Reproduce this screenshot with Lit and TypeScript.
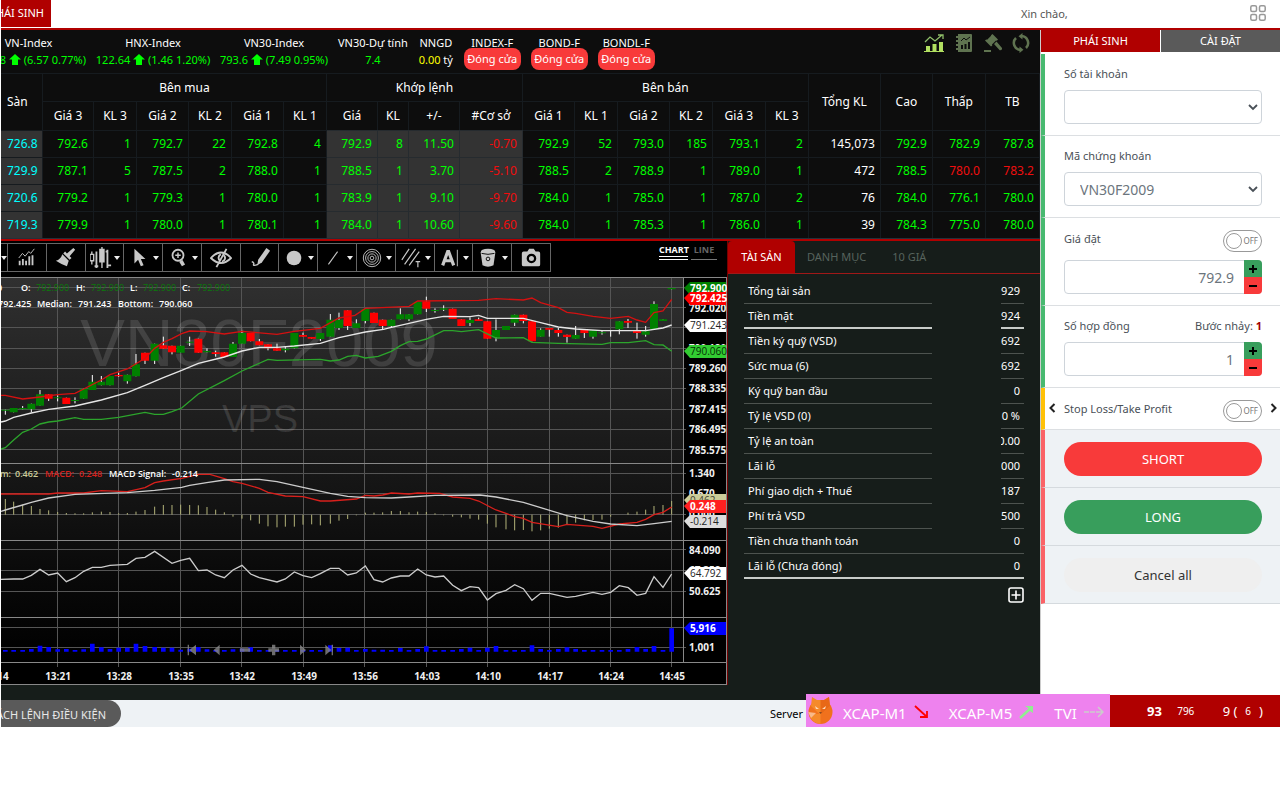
import { LitElement, html, svg, css } from "lit";
import { customElement, property } from "lit/decorators.js";
import { classMap } from "lit/directives/class-map.js";

/* ------------------------------------------------------------------ */
/* Price board                                                         */
/* ------------------------------------------------------------------ */

const COLS = [42, 51, 43, 52, 43, 52, 43, 51, 31, 51, 63, 52, 43, 52, 43, 53, 43, 72, 52, 53, 54];
const COL_SUM = COLS.reduce((a, b) => a + b, 0);

const ROWS: string[][] = [
  ["726.8", "792.6", "1", "792.7", "22", "792.8", "4", "792.9", "8", "11.50", "-0.70", "792.9", "52", "793.0", "185", "793.1", "2", "145,073", "792.9", "782.9", "787.8"],
  ["729.9", "787.1", "5", "787.5", "2", "788.0", "1", "788.5", "1", "3.70", "-5.10", "788.5", "2", "788.9", "1", "789.0", "1", "472", "788.5", "780.0", "783.2"],
  ["720.6", "779.2", "1", "779.3", "1", "780.0", "1", "783.9", "1", "9.10", "-9.70", "784.0", "1", "785.0", "1", "787.0", "2", "76", "784.0", "776.1", "780.0"],
  ["719.3", "779.9", "1", "780.0", "1", "780.1", "1", "784.0", "1", "10.60", "-9.60", "784.0", "1", "785.3", "1", "786.0", "1", "39", "784.3", "775.0", "780.0"],
];
const RED_CELLS = new Set(["1:19", "1:20"]);

const up = svg`<svg class="up" viewBox="0 0 12 11" width="12" height="11"><path fill="#0f0" d="M6 0 12 5.5H9V11H3V5.5H0z"/></svg>`;

@customElement("price-board")
export class PriceBoard extends LitElement {
  static styles = css`
    :host { display: block; background: #0d0d0d; color: #fff; }
    .strip { display: flex; justify-content: space-between; height: 43px; overflow: hidden; }
    .indices { display: flex; gap: 10px; padding-top: 4px; }
    .index { display: flex; flex-direction: column; align-items: center; white-space: nowrap; font-size: 11px; line-height: 18px; min-width: 36px; }
    .index.first { margin-left: -30px; width: 115px; }
    .index.wide { width: 114px; }
    .index.mid { width: 108px; }
    .value { color: #0f0; line-height: 16px; height: 16px; }
    .first .value { align-self: flex-end; }
    .up { vertical-align: -1px; }
    .nn { color: #ff0; }
    .nn i { color: #fff; font-style: normal; }
    .closed { background: #f83a3a; border-radius: 8px; width: 57px; height: 22px; line-height: 22px; margin-top: -4px; text-align: center; color: #fff; }
    .icons { display: flex; gap: 9px; padding: 3px 9px 0 0; align-items: flex-start; }
    .icons button { padding: 0; border: 0; background: none; width: 20px; height: 20px; display: grid; place-items: center; }
    table { width: 100%; table-layout: fixed; border-collapse: separate; border-spacing: 0; font-size: 12px; line-height: 18px; }
    th, td { padding: 0; box-sizing: border-box; border-right: 1px solid #161b1f; border-top: 1px solid #161b1f; white-space: nowrap; }
    th { font-weight: 400; }
    th.floor { text-align: left; padding-left: 6px; }
    .h1 { height: 28px; }
    .h2 { height: 29px; }
    td { height: 27px; text-align: right; padding-right: 5px; color: #0f0; }
    td.floor { color: #0ff; background: #333; text-align: left; padding-left: 6px; }
    td.match { background: #333; border-color: #262b2f; }
    td.red { color: #f00d0d; }
    td.total { color: #fff; }
    .base { height: 3px; background: #b00000; border-top: 1px solid #25303a; box-sizing: border-box; }
  `;

  render() {
    return html`
      <div class="strip">
        <div class="indices">
          <div class="index first"><span>VN-Index</span><span class="value">8 ${up} (6.57 0.77%)</span></div>
          <div class="index wide"><span>HNX-Index</span><span class="value">122.64 ${up} (1.46 1.20%)</span></div>
          <div class="index mid"><span>VN30-Index</span><span class="value">793.6 ${up} (7.49 0.95%)</span></div>
          <div class="index"><span>VN30-Dự tính</span><span class="value">7.4</span></div>
          <div class="index"><span>NNGD</span><span class="value nn">0.00 <i>tỷ</i></span></div>
          ${["INDEX-F", "BOND-F", "BONDL-F"].map((n) => html`<div class="index"><span>${n}</span><span class="closed">Đóng cửa</span></div>`)}
        </div>
        <div class="icons">
          <button aria-label="Biểu đồ"><svg width="20" height="20" viewBox="0 0 20 20" fill="#b2e061"><path d="M2 13h4v5H2zM8.500 11h4v7h-4zM15 9h4v9h-4zM0 18h20v1H0z"/><path d="M1 9 6 4l5 4 7-6M14 2h5v4" fill="none" stroke="#8fbf6a" stroke-width="1.300"/></svg></button>
          <button aria-label="Sổ"><svg width="20" height="20" viewBox="0 0 20 20"><path fill="#5f7350" d="M5 1h13q1 0 1 1v16q0 1-1 1H5zM3 3h3v2H3zM3 7h3v2H3zM3 11h3v2H3zM3 15h3v2H3z"/><path d="M8 8 11 5l2 2 4-3" fill="none" stroke="#0d0d0d"/><path fill="#0d0d0d" d="M8 12h2v4H8zM11.500 11h2v5h-2zM15 9h2v7h-2z"/></svg></button>
          <button aria-label="Đấu giá"><svg width="20" height="20" viewBox="0 0 20 20" fill="#5f7350"><path d="M10.500 1 16 6.500l-1.200 1.200-.8-.2-4 4 .3.900-1.300 1.200L3 7.600l1.200-1.200.9.300 4-4L9 2.200zM12 11l2.500-2.500 5.500 6.500q.3 2.500-2.300 2.300zM2 17h7v2H2z"/></svg></button>
          <button aria-label="Tải lại"><svg width="20" height="20" viewBox="0 0 20 20"><g fill="none" stroke="#5f7350" stroke-width="2.500"><path d="M9.500 17A7 7 0 0 1 5 5M10.500 3A7 7 0 0 1 15 15"/></g><path fill="#5f7350" d="M11.500 0v6.500L7.500 3.200zM8.500 13.500V20l4-3.300z"/></svg></button>
        </div>
      </div>
      <table>
        <colgroup>${COLS.map((w) => html`<col style="width:${(w / COL_SUM) * 100}%" />`)}</colgroup>
        <thead>
          <tr>
            <th class="floor" rowspan="2">Sàn</th>
            <th class="h1" colspan="6">Bên mua</th>
            <th colspan="4">Khớp lệnh</th>
            <th colspan="6">Bên bán</th>
            ${["Tổng KL", "Cao", "Thấp", "TB"].map((t) => html`<th rowspan="2">${t}</th>`)}
          </tr>
          <tr>
            ${["Giá 3", "KL 3", "Giá 2", "KL 2", "Giá 1", "KL 1", "Giá", "KL", "+/-", "#Cơ sở", "Giá 1", "KL 1", "Giá 2", "KL 2", "Giá 3", "KL 3"].map((t) => html`<th class="h2">${t}</th>`)}
          </tr>
        </thead>
        <tbody>
          ${ROWS.map((r, y) => html`<tr>${r.map((v, x) => html`<td class=${classMap({
            floor: x === 0,
            match: x > 6 && x < 11,
            red: x === 10 || RED_CELLS.has(`${y}:${x}`),
            total: x === 17,
          })}>${v}</td>`)}</tr>`)}
        </tbody>
      </table>
      <div class="base"></div>
    `;
  }
}

/* ------------------------------------------------------------------ */
/* Chart                                                               */
/* ------------------------------------------------------------------ */

// x centre, body top, body bottom, wick top, wick bottom, 1 = rising
const CANDLES: number[][] = [
  [16, 509, 512, 509, 524, 1], [41, 504, 517, 504, 517, 1], [68, 504, 508, 498, 508, 1], [94, 491, 508, 491, 517, 1],
  [120, 463, 497, 450, 497, 1], [146, 463, 476, 463, 483, 0], [173, 472, 475, 466, 484, 1], [199, 473, 492, 473, 492, 0],
  [225, 480, 483, 472, 490, 1], [251, 446, 476, 446, 476, 1], [277, 425, 450, 405, 450, 1], [304, 425, 436, 408, 436, 1],
  [330, 408, 436, 408, 436, 1], [356, 405, 409, 398, 411, 0], [382, 404, 424, 404, 431, 1], [408, 373, 409, 342, 409, 1],
  [435, 338, 362, 338, 372, 0], [464, 311, 362, 311, 372, 1], [490, 316, 326, 290, 326, 0], [516, 317, 337, 317, 343, 0],
  [542, 317, 338, 317, 338, 1], [569, 305, 308, 290, 318, 1], [595, 296, 338, 296, 338, 0], [621, 333, 337, 325, 337, 1],
  [647, 337, 342, 332, 350, 0], [673, 337, 351, 337, 351, 0], [699, 311, 351, 306, 351, 1], [726, 279, 311, 272, 311, 1],
  [752, 279, 304, 279, 304, 0], [778, 304, 316, 297, 316, 0], [804, 313, 325, 313, 331, 0], [831, 325, 332, 311, 332, 0],
  [856, 326, 331, 320, 337, 1], [883, 279, 325, 279, 325, 1], [909, 285, 290, 278, 290, 0], [935, 291, 296, 291, 296, 0],
  [961, 279, 297, 279, 303, 1], [991, 239, 290, 222, 290, 1], [1017, 239, 264, 218, 270, 1], [1043, 211, 258, 211, 270, 0],
  [1069, 250, 264, 238, 264, 1], [1096, 207, 243, 207, 250, 1], [1122, 218, 249, 218, 249, 0], [1148, 239, 258, 239, 268, 0],
  [1174, 239, 258, 239, 264, 1], [1201, 223, 238, 205, 238, 1], [1227, 223, 238, 223, 243, 1], [1253, 186, 223, 186, 223, 1],
  [1279, 184, 206, 170, 216, 0], [1305, 210, 213, 205, 218, 1], [1331, 205, 209, 196, 213, 1], [1358, 206, 237, 206, 237, 0],
  [1384, 238, 258, 238, 258, 0], [1410, 240, 249, 232, 258, 1], [1436, 238, 243, 233, 243, 0], [1462, 244, 296, 244, 296, 0],
  [1488, 270, 292, 238, 304, 1], [1518, 258, 270, 258, 270, 1], [1544, 224, 248, 224, 258, 1], [1570, 224, 243, 224, 250, 0],
  [1596, 244, 304, 244, 304, 0], [1622, 269, 290, 265, 290, 1], [1648, 264, 269, 264, 290, 0], [1675, 270, 279, 264, 290, 0],
  [1701, 284, 291, 284, 308, 0], [1727, 285, 296, 258, 296, 1], [1753, 270, 279, 270, 294, 0], [1779, 271, 290, 271, 296, 1],
  [1806, 277, 280, 270, 284, 1], [1832, 270, 273, 270, 290, 1], [1858, 244, 268, 244, 283, 1], [1884, 243, 248, 237, 264, 0],
  [1911, 273, 279, 248, 296, 0], [1937, 274, 284, 258, 290, 1], [1962, 192, 267, 184, 267, 1], [1989, 238, 243, 238, 243, 1],
  [2015, 144, 148, 144, 148, 1],
];

const UPPER = "3,466 16,466 68,477 120,471 173,464 225,460 251,447 304,420 330,404 382,387 435,355 464,325 490,307 516,296 545,281 569,273 620,275 673,282 726,274 831,283 883,274 961,265 1017,234 1065,226 1096,205 1227,199 1253,183 1436,181 1488,176 1570,180 1596,174 1622,188 1675,203 1701,217 1727,220 1779,229 1832,235 1885,229 1911,240 1937,247 1962,218 1989,213 2015,178";
const MEDIAN = "3,546 16,543 41,532 94,519 146,508 225,498 304,480 382,458 435,436 490,413 545,391 595,370 673,351 726,333 778,322 831,322 883,318 961,310 1017,293 1096,276 1150,268 1174,262 1227,250 1279,238 1331,229 1410,230 1436,226 1462,235 1570,235 1622,248 1675,261 1727,267 1806,272 1937,272 1989,264 2015,255";
const LOWER = "3,627 16,623 41,600 68,577 94,567 120,552 146,546 173,543 225,533 251,538 304,538 356,532 435,517 464,523 490,523 516,515 545,504 595,462 673,422 726,393 804,358 831,361 961,358 991,363 1017,360 1043,349 1069,346 1096,354 1135,349 1174,334 1201,317 1227,305 1253,304 1279,297 1331,272 1358,272 1384,275 1436,269 1488,294 1570,293 1596,307 1675,310 1806,313 1832,308 1885,308 1937,302 1962,314 1989,315 2015,334";
const MACD = "3,102 146,102 173,99 251,99 304,92 382,95 435,83 464,68 490,63 545,55 595,43 630,43 673,56 699,65 726,70 778,85 804,97 856,108 909,110 961,123 991,123 1069,117 1096,106 1122,108 1148,105 1174,99 1227,102 1253,99 1320,100 1358,111 1410,115 1436,123 1488,150 1518,160 1544,170 1570,175 1596,187 1675,200 1701,193 1779,199 1806,205 1858,192 1911,187 1937,178 1962,164 1989,157 2015,141";
const SIGNAL = "3,154 16,150 68,135 94,127 146,114 225,103 382,98 464,91 545,82 569,76 620,68 673,60 778,58 831,65 909,82 991,100 1043,109 1096,113 1174,114 1227,111 1305,106 1440,105 1488,111 1570,127 1622,143 1701,167 1779,184 1832,192 1911,197 1962,191 2015,184";
const RSI = "3,358 41,357 68,357 94,346 120,328 146,345 173,339 199,365 225,353 251,334 277,322 304,322 330,316 382,313 408,295 435,292 464,274 516,310 542,301 569,295 595,332 621,330 647,345 673,353 699,330 726,316 752,342 778,353 831,366 856,357 883,336 909,347 935,353 961,341 991,325 1017,325 1043,345 1069,339 1096,318 1122,359 1148,366 1174,354 1201,348 1227,348 1253,327 1279,345 1305,351 1331,348 1358,376 1384,392 1410,380 1436,383 1462,420 1488,401 1518,391 1544,374 1570,386 1596,421 1622,400 1648,400 1701,412 1727,409 1779,397 1806,403 1832,397 1858,377 1885,383 1911,406 1937,400 1962,350 1989,382 2015,342";

// one value per candle, measured from the zero line at 164
const HIST = [117, 125, 134, 138, 147, 151, 156, 159, 160, 160, 157, 155, 156, 160, 159, 155, 150, 140, 135, 135, 134, 135, 136, 141, 149, 157, 170, 176, 181, 191, 199, 202, 200, 200, 194, 193, 196, 191, 182, 177, 166, 158, 158, 157, 153, 153, 157, 155, 156, 160, 166, 170, 172, 176, 179, 191, 202, 208, 211, 210, 214, 211, 206, 203, 192, 188, 181, 180, 179, 170, 164, 158, 155, 149, 138, 135, 123];

// bars taller than the usual minimum, by candle x
const VOLUME: Record<number, number> = {
  94: 567, 120: 557, 146: 561, 173: 568, 199: 567, 225: 570, 251: 568, 277: 551, 304: 562, 330: 567, 356: 563, 382: 563,
  408: 551, 435: 558, 464: 561, 490: 563, 516: 563, 542: 569, 569: 566, 595: 561, 621: 568, 699: 568, 726: 566, 752: 562,
  991: 556, 1017: 564, 1043: 563, 1096: 567, 1122: 569, 1148: 569, 1201: 564, 1253: 567, 1279: 559, 1384: 567,
  1410: 563, 1462: 563, 1488: 558, 1596: 556, 1622: 567, 1675: 567, 1701: 562, 1727: 567, 1884: 567, 1911: 561,
  1937: 567, 1962: 558, 2015: 505,
};

const GRID_Y = [288, 308, 328, 349, 369, 389, 410, 430, 450, 474, 494, 515, 550, 571, 592, 628, 648];
const GRID_X = [58, 119, 181, 242, 304, 365, 427, 488, 550, 611, 672];
const TIMES = ["13:21", "13:28", "13:35", "13:42", "13:49", "13:56", "14:03", "14:10", "14:17", "14:24", "14:45"];
const PRICES: [string, number][] = [
  ["792.020", 308], ["790.180", 348], ["789.260", 368], ["788.335", 388], ["787.415", 409], ["786.495", 429], ["785.575", 450],
  ["1.340", 473], ["0.670", 493], ["0.000", 514], ["84.090", 550], ["67.358", 570], ["50.625", 591], ["1,001", 647],
];
const TAGS: [string, number, string, string, boolean][] = [
  ["792.900", 288, "#008000", "#fff", true], ["792.425", 298, "#f00", "#fff", true], ["791.243", 325, "#fff", "#222", false],
  ["790.060", 351, "#32cd32", "#063006", false], ["0.462", 500, "#cccc99", "#443", false], ["0.248", 506, "#ff2020", "#fff", true],
  ["-0.214", 521, "#ddd", "#222", false], ["64.792", 573, "#fff", "#222", false], ["5,916", 628, "#00f", "#fff", true],
];

const g = "#c8c8c8";
const TOOLS: [string, unknown, boolean][] = [
  ["Chỉ báo", svg`<g stroke=${g} fill="none"><path d="M3 12 7 7l3 3 4-5 2 2 4-5"/><path stroke-width="2" d="M4 20v-5M7.500 20v-7M11 20v-5M14.500 20V10M18 20V9"/></g>`, false],
  ["Định dạng", svg`<path fill=${g} d="m20 1 2 2-6 7 2 2-2 2-7-7 2-2 2 2zM8 8l7 7-2 6q-6-2-12-6 5-1 7-7z"/>`, false],
  ["Kiểu nến", svg`<g stroke=${g} fill="none" stroke-width="1.500"><path d="M0 8h4v7H0zM2 5v3M2 15v4"/><path d="M7 5v18M5 21h4M19 3v20M17 5h2M19 20h4" stroke-width="2"/></g><path fill=${g} d="M10 2h6v15h-6zM12.300 0h1.500v23h-1.500z"/>`, true],
  ["Con trỏ", svg`<path fill=${g} d="M7 2v16l4-4 3 7 3-1-3-7h5z"/>`, true],
  ["Phóng to", svg`<g fill="none" stroke=${g} stroke-width="2"><circle cx="12" cy="9" r="6"/><path stroke-width="4" d="m15 15 3 5"/></g><path fill=${g} d="M9 8.200h6v1.600H9zM11.200 6h1.600v6h-1.600z"/>`, true],
  ["Ẩn hiện", svg`<g fill="none" stroke=${g} stroke-width="2"><path d="M1 12q11-12 22 0Q12 23 1 12zM18 2 7 22"/><path d="M12 8a4 4 0 0 0-1 7M15 9a4 4 0 0 1-2 7"/></g>`, false],
  ["Vẽ", svg`<path fill=${g} d="m19 1 4 3-9 13-5 3 1-6z"/><path d="M3 16q3 1 2 3t5 0" stroke=${g} stroke-width="1.500" fill="none"/>`, false],
  ["Hình", svg`<circle cx="12" cy="12" r="8" fill=${g}/>`, true],
  ["Đường", svg`<path d="M7 19 17 5" stroke=${g} stroke-width="1.200"/>`, true],
  ["Vòng tròn", svg`<g fill="none" stroke=${g}><circle cx="12" cy="12" r="9.500"/><circle cx="12" cy="12" r="7"/><circle cx="12" cy="12" r="4.500"/><circle cx="12" cy="12" r="2"/></g>`, true],
  ["Kênh", svg`<g stroke=${g} fill="none" stroke-width="1.300"><path d="M2 14 10 2M5 19 17 2M10 20 21 5"/><path d="M17 16h5M19.500 16v6"/></g>`, true],
  ["Văn bản", svg`<path fill="none" stroke=${g} stroke-width="3.500" d="M4 20 9.500 5h1L16 20M6 15h8"/><path d="M20 3v18" stroke=${g}/>`, true],
  ["Xóa", svg`<path fill=${g} d="M4 6q0-4 8-4t8 4l-2 14q-6 3-12 0z"/><path d="M5 7q7 2 14 0" stroke="#000" fill="none"/><circle cx="12" cy="13" r="2" fill="none" stroke="#000"/>`, true],
  ["Chụp ảnh", svg`<path fill=${g} d="M4 5h4l2-3h5l2 3h3q2 0 2 2v12q0 2-2 2H4q-2 0-2-2V7q0-2 2-2z"/><circle cx="12.500" cy="12.500" r="4" fill=${g} stroke="#000" stroke-width="2.500"/>`, false],
];

@customElement("trade-chart")
export class TradeChart extends LitElement {
  static styles = css`
    :host { display: block; background: #000; overflow: hidden; }
    .bar { display: flex; justify-content: space-between; height: 36px; padding-top: 2px; box-sizing: border-box; }
    .tools { display: grid; grid-template-columns: 7px repeat(14, minmax(0, 1fr)); width: 550px; height: 29px; }
    .tools button { display: flex; align-items: center; justify-content: center; padding: 0; background: #000; border: 1px solid #666; border-left-width: 0; box-sizing: border-box; min-width: 0; }
    .tools button.cut { border-left: 0; justify-content: flex-start; }
    .tools button.menu { justify-content: space-between; padding: 0 3px 0 4px; }
    .caret { width: 0; height: 0; border: 3px solid transparent; border-top: 4px solid #eee; border-bottom: 0; flex: none; }
    .modes { display: flex; gap: 3px; padding: 1px 10px 0 0; font-family: "Open Sans", "Noto Sans", sans-serif; }
    .modes button { background: none; padding: 0 0 4px; box-sizing: border-box; border: 0; border-bottom: 1px solid #777; font: 700 9px/11px "Open Sans", "Noto Sans", sans-serif; color: #666; height: 16px; width: 26px; text-align: center; }
    .modes button.on { color: #fff; border-bottom: 4px double #fff; width: 29px; padding-bottom: 1px; }
    .wrap { display: flex; justify-content: flex-end; }
    svg.plot { flex: none; display: block; width: 726px; height: 408px; font-family: "Open Sans", "Noto Sans", sans-serif; font-size: 10px; }
    .b { font-weight: 700; fill: #f0f0f0; }
    .sm { font-size: 9px; font-weight: 600; fill: #fff; }
    .gr { fill: #0a7a0a; font-weight: 400; }
    .mark { font-family: "Liberation Sans", Arial, sans-serif; fill: #fff; fill-opacity: 0.12; text-anchor: middle; }
    .mk1 { font-size: 67px; }
    .mk2 { font-size: 38px; }
    .t { text-anchor: middle; }
  `;

  render() {
    return html`
      <div class="bar">
        <div class="tools">
          <button class="cut" aria-label="Khung thời gian"><span class="caret"></span></button>
          ${TOOLS.map(([name, art, menu]) => html`<button class=${menu ? "menu" : ""} aria-label=${name}><svg width="22" height="22" viewBox="0 0 24 24">${art}</svg>${menu ? html`<span class="caret"></span>` : ""}</button>`)}
        </div>
        <div class="modes"><button class="on">CHART</button><button>LINE</button></div>
      </div>
      <div class="wrap">
        <svg class="plot" viewBox="1 277 726 408">
          <defs>
            <linearGradient id="bg" x1="0" y1="0" x2="0" y2="1"><stop offset="0" stop-color="#303030"/><stop offset=".8" stop-color="#080808"/><stop offset="1" stop-color="#000"/></linearGradient>
          </defs>
          <rect x="0" y="277" width="728" height="408" fill="#000"/>
          <rect x="0" y="278" width="683" height="384" fill="url(#bg)"/>
          <path stroke="#555" stroke-width="1" fill="none" d=${GRID_Y.map((y) => `M0 ${y - 0.5}H686`).join("") + GRID_X.map((x) => `M${x - 0.5} 278V667`).join("")}/>
          <text class="mark mk1" x="259" y="366">VN30F2009</text>
          <text class="mark mk2" x="260" y="432">VPS</text>
          <path stroke="#888" fill="none" d="M0 277.500H727M0 463.500H727M0 540.500H727M0 617.500H727M0 662.500H727M0 684.500H727M683.500 277V662M726.500 277V685"/>
          <g transform="translate(0 240) scale(.33333)" fill="none">
            <path stroke="#fff" stroke-width="3" d=${CANDLES.map((c) => `M${c[0]} ${c[3]}V${c[4]}`).join("")}/>
            <path fill="#008000" d=${CANDLES.filter((c) => c[5]).map((c) => `M${c[0] - 12} ${c[1]}h24V${c[2]}h-24z`).join("")}/>
            <path fill="#f00" d=${CANDLES.filter((c) => !c[5]).map((c) => `M${c[0] - 12} ${c[1]}h24V${c[2]}h-24z`).join("")}/>
            <g stroke-width="4">
              <polyline stroke="#d41111" points=${UPPER}/>
              <polyline stroke="#e6e6e6" points=${MEDIAN}/>
              <polyline stroke="#2ca52c" points=${LOWER}/>
            </g>
            <g transform="translate(0 660)">
              <path stroke="#b5b57a" stroke-width="3" d=${CANDLES.map((c, i) => `M${c[0]} 164V${HIST[i]}`).join("")}/>
              <g stroke-width="4">
                <polyline stroke="#d8201c" points=${MACD}/>
                <polyline stroke="#ccc" points=${SIGNAL}/>
                <polyline stroke="#ccc" points=${RSI}/>
              </g>
              <path fill="#00f" d=${CANDLES.map((c) => `M${c[0] - 7} ${VOLUME[c[0]] ?? 570}h14V575h-14z`).join("")}/>
              <path fill="#888" fill-opacity=".8" d="M563 554h4v32h-4zM588 554v32L568 570zM659 554v32L641 570zM720 565h30v10h-30zM805 565h11V554h10v11h11v10h-11v11h-10v-11h-11zM900 554v32L918 570zM976 554v32L994 570zM995 554h4v32h-4z"/>
            </g>
          </g>
          <g class="sm">
            <text x="-3" y="291">0</text>
            <text x="21" y="291">O:</text><text class="gr" x="36" y="291">792.900</text>
            <text x="76" y="291">H:</text><text class="gr" x="91" y="291">792.900</text>
            <text x="130" y="291">L:</text><text class="gr" x="143" y="291">792.900</text>
            <text x="182" y="291">C:</text><text class="gr" x="197" y="291">792.900</text>
            <text x="-2" y="307">792.425</text><text x="37" y="307">Median:</text><text x="78" y="307">791.243</text>
            <text x="118" y="307">Bottom:</text><text x="159" y="307">790.060</text>
            <text x="0" y="477" fill="#cccc99">m:</text><text x="15" y="477" fill="#cccc99">0.462</text>
            <text x="45" y="477" fill="#d8201c">MACD:</text><text x="79" y="477" fill="#d8201c">0.248</text>
            <text x="109" y="477">MACD Signal:</text><text x="172" y="477">-0.214</text>
          </g>
          ${PRICES.map(([t, y]) => svg`<text class="b" x="689" y=${y + 4}>${t}</text>`)}
          ${TAGS.map(([t, y, bg, fg, bold]) => svg`<path fill=${bg} d="M684 ${y} 690 ${y - 6}H726V${y + 7}H690z"/><text x="690" y=${y + 4} fill=${fg} font-weight=${bold ? 700 : 400}>${t}</text>`)}
          <text class="b t" x="3" y="680">14</text>
          ${TIMES.map((t, i) => svg`<text class="b t" x=${GRID_X[i]} y="680">${t}</text>`)}
        </svg>
      </div>
    `;
  }
}

/* ------------------------------------------------------------------ */
/* Assets                                                              */
/* ------------------------------------------------------------------ */

const ASSETS: [string, string][] = [
  ["Tổng tài sản", "929"], ["Tiền mặt", "924"], ["Tiền ký quỹ (VSD)", "692"], ["Sức mua (6)", "692"],
  ["Ký quỹ ban đầu", "0"], ["Tỷ lệ VSD (0)", "0 %"], ["Tỷ lệ an toàn", "0.00"], ["Lãi lỗ", "000"],
  ["Phí giao dịch + Thuế", "187"], ["Phí trả VSD", "500"], ["Tiền chưa thanh toán", "0"], ["Lãi lỗ (Chưa đóng)", "0"],
];

@customElement("asset-panel")
export class AssetPanel extends LitElement {
  static styles = css`
    :host { display: block; background: #161d1a; color: #fff; border-left: 1px solid #700; box-sizing: border-box; }
    .tabs { display: flex; height: 33px; box-sizing: border-box; border-bottom: 1px solid #a01818; }
    .tabs button { border: 0; padding: 0 14px 0 12px; background: none; color: #57635d; font: 11px/32px "Noto Sans", sans-serif; }
    .tabs button.on { background: #b00000; color: #fff; border-radius: 4px 4px 0 0; width: 67px; padding: 0; }
    .body { padding: 5px 16px 0 16px; }
    table { width: 100%; border-collapse: separate; border-spacing: 0; table-layout: fixed; font-size: 11px; line-height: 18px; }
    th, td { height: 25px; box-sizing: border-box; padding: 0; border-bottom: 1px solid #4d534f; font-weight: 400; white-space: nowrap; }
    th { text-align: left; padding-left: 4px; width: 188px; }
    td.gap { border-color: transparent; }
    td.val { width: 23px; }
    .num { display: flex; justify-content: flex-end; overflow: hidden; padding-right: 4px; }
    .full td.gap { border-color: #4d534f; }
    .thick th, .thick td.val { border-bottom: 2px solid #c8ccc9; }
    .thick.full td.gap { border-bottom: 2px solid #c8ccc9; }
    .more { display: flex; justify-content: flex-end; padding-top: 8px; }
    .more button { background: none; border: 0; padding: 0; height: 16px; }
  `;

  render() {
    return html`
      <div class="tabs"><button class="on">TÀI SẢN</button><button>DANH MỤC</button><button>10 GIÁ</button></div>
      <div class="body">
        <table>
          ${ASSETS.map(([k, v], i) => html`<tr class=${classMap({ thick: i === 1 || i === 11, full: i > 9 })}><th scope="row">${k}</th><td class="gap"></td><td class="val"><div class="num">${v}</div></td></tr>`)}
        </table>
        <div class="more"><button aria-label="Thêm"><svg width="16" height="16" viewBox="0 0 16 16" fill="none" stroke="#fff"><rect x="1" y="1" width="14" height="14" rx="2" stroke-width="1.600"/><path stroke-width="1.600" d="M8 3.500v9M3.500 8h9"/></svg></button></div>
      </div>
    `;
  }
}

/* ------------------------------------------------------------------ */
/* Order form                                                          */
/* ------------------------------------------------------------------ */

@customElement("order-form")
export class OrderForm extends LitElement {
  static styles = css`
    :host { display: block; background: #fff; color: #495057; border-left: 1px solid #ccc; box-sizing: border-box; font-size: 11px; line-height: 20px; }
    button, input, select { font-family: "Noto Sans", sans-serif; }
    .tabs { display: grid; grid-template-columns: 1fr 1fr; gap: 1px; height: 22px; margin-bottom: 2px; }
    .tabs button { border: 0; padding: 0; background: #5a5a5a; color: #fff; font-size: 11px; line-height: 22px; }
    .tabs button.on { background: #b00000; }
    .sec { border-left: 4px solid #48b970; border-bottom: 1px solid #dcdfe2; padding: 10px 18px 11px 19px; }
    .sec.price { padding-top: 11px; }
    .row { display: flex; justify-content: space-between; align-items: center; height: 20px; margin-bottom: 6px; }
    .price .row { height: 24px; margin-bottom: 7px; }
    .price .row > label:first-child { margin-bottom: 4px; }
    .row b { color: #a00000; }
    .box { display: grid; align-items: center; height: 34px; }
    .box > * { grid-area: 1 / 1; }
    .box > svg { justify-self: end; margin-right: 4px; pointer-events: none; }
    select, .field { width: 100%; height: 34px; box-sizing: border-box; border: 1px solid #ced4da; border-radius: 4px; background: #fff; color: #6c757d; font-size: 14px; }
    select { appearance: none; padding: 0 15px; }
    .field { text-align: right; padding: 0 27px 0 8px; }
    .steps { justify-self: end; display: grid; grid-template-rows: 1fr 1fr; width: 18px; height: 34px; border-radius: 0 4px 4px 0; overflow: hidden; }
    .steps button { border: 0; padding: 0; display: grid; place-items: center; background: #389e5c; }
    .steps button + button { background: #f83a3a; }
    .toggle { display: grid; width: 39px; height: 22px; align-items: center; }
    .toggle input, .toggle span { grid-area: 1 / 1; margin: 0; }
    .toggle input { appearance: none; width: 39px; height: 22px; border: 1px solid #999; border-radius: 11px; box-sizing: border-box; padding: 2px; }
    .toggle input::before { content: ""; display: block; width: 14px; height: 14px; border: 1px solid #999; border-radius: 50%; }
    .toggle span { justify-self: end; padding-right: 4px; font-size: 8px; line-height: 10px; color: #777; }
    .sl { border-left-color: #ffc107; padding: 12px 2px 7px 3px; }
    .sl .row { height: 22px; margin: 0; gap: 8px; justify-content: flex-start; }
    .sl .name { flex: 1; padding-bottom: 5px; }
    .arrow { padding: 0 0 6px; border: 0; background: none; width: 8px; height: 16px; display: grid; place-items: center; }
    .act { border-left-color: #fa6266; background: #eef2f5; padding-top: 12px; border-bottom-color: #d5dade; }
    .act button { display: block; width: 100%; height: 34px; border: 0; border-radius: 17px; font-size: 13px; color: #fff; background: #f83a3a; }
    .act .long { background: #389e5c; }
    .act .cancel { background: #efefef; color: #333; }
  `;

  private chevron() {
    return html`<svg width="10" height="7" viewBox="0 0 10 7"><path d="M1 1l4 4 4-4" fill="none" stroke="#495057" stroke-width="1.800"/></svg>`;
  }

  private steps() {
    return html`<div class="steps">
      <button aria-label="Tăng"><svg width="10" height="10" viewBox="0 0 10 10"><path d="M5 1v8M1 5h8" stroke="#000" stroke-width="2"/></svg></button>
      <button aria-label="Giảm"><svg width="10" height="10" viewBox="0 0 10 10"><path d="M1 5h8" stroke="#000" stroke-width="2"/></svg></button>
    </div>`;
  }

  private toggle(name: string) {
    return html`<label class="toggle"><input type="checkbox" aria-label=${name} /><span>OFF</span></label>`;
  }

  render() {
    return html`
      <div class="tabs"><button class="on">PHÁI SINH</button><button>CÀI ĐẶT</button></div>
      <div class="sec">
        <div class="row"><label for="acc">Số tài khoản</label></div>
        <div class="box"><select id="acc"><option></option></select>${this.chevron()}</div>
      </div>
      <div class="sec">
        <div class="row"><label for="sym">Mã chứng khoán</label></div>
        <div class="box"><select id="sym"><option>VN30F2009</option></select>${this.chevron()}</div>
      </div>
      <div class="sec price">
        <div class="row"><label for="price">Giá đặt</label>${this.toggle("Giá đặt")}</div>
        <div class="box"><input class="field" id="price" type="text" value="792.9" />${this.steps()}</div>
      </div>
      <div class="sec">
        <div class="row"><label for="qty">Số hợp đồng</label><span>Bước nhảy: <b>1</b></span></div>
        <div class="box"><input class="field" id="qty" type="text" value="1" />${this.steps()}</div>
      </div>
      <div class="sec sl">
        <div class="row">
          <button class="arrow" aria-label="Trước"><svg width="8" height="10" viewBox="0 0 8 10"><path d="M6.500 1l-4 4 4 4" fill="none" stroke="#222" stroke-width="2"/></svg></button>
          <span class="name">Stop Loss/Take Profit</span>
          ${this.toggle("Stop Loss/Take Profit")}
          <button class="arrow" aria-label="Sau"><svg width="8" height="10" viewBox="0 0 8 10"><path d="M1.500 1l4 4-4 4" fill="none" stroke="#222" stroke-width="2"/></svg></button>
        </div>
      </div>
      <div class="sec act"><button>SHORT</button></div>
      <div class="sec act"><button class="long">LONG</button></div>
      <div class="sec act"><button class="cancel">Cancel all</button></div>
    `;
  }
}

/* ------------------------------------------------------------------ */
/* Page                                                                */
/* ------------------------------------------------------------------ */

@customElement("app-root")
export class AppRoot extends LitElement {
  @property() greeting = "Xin chào,";

  static styles = css`
    :host { display: block; background: #fff; font-family: "Noto Sans", sans-serif; font-size: 12px; min-height: 100vh; }
    .page { position: relative; padding-left: 1px; overflow: hidden; }
    header { display: flex; justify-content: space-between; align-items: center; height: 28px; box-sizing: border-box; }
    .home { display: flex; justify-content: flex-end; width: 50px; height: 27px; box-sizing: border-box; padding-right: 7px; overflow: hidden; background: #b00000; color: #fff; text-decoration: none; font-size: 11px; line-height: 26px; white-space: nowrap; align-self: flex-start; }
    .user { display: flex; align-items: center; width: 259px; box-sizing: border-box; padding-right: 14px; justify-content: space-between; color: #555; font-size: 11px; line-height: 24px; }
    .user button { border: 0; background: none; padding: 0; height: 20px; }
    main { display: grid; grid-template-columns: minmax(0, 1fr) 240px; border-top: 2px solid #b00000; }
    .left { background: #161d1a; padding-bottom: 15px; }
    .work { display: grid; grid-template-columns: minmax(0, 1fr) 313px; }
    footer { display: flex; align-items: center; height: 27px; background: #eef2f5; }
    .orders { display: flex; justify-content: flex-end; width: 120px; height: 27px; box-sizing: border-box; padding: 0 15px 0 0; border: 0; overflow: hidden; background: #5a5a5a; color: #e8e8e8; border-radius: 0 14px 14px 0; font: 11px/29px "Noto Sans", sans-serif; white-space: nowrap; }
    .server { flex: 1; text-align: right; padding-right: 477px; font-size: 11px; line-height: 30px; color: #000; }
    .ticker { position: absolute; right: 0; bottom: 0; display: flex; height: 33px; color: #fff; white-space: nowrap; }
    .robots { display: flex; align-items: center; width: 304px; box-sizing: border-box; padding: 0 0 0 2px; background: #ee82ee; font-size: 15px; line-height: 32px; gap: 20px; }
    .robots span { display: flex; align-items: center; gap: 7px; padding-top: 5px; flex: none; }
    .robots > svg { margin-right: -10px; flex: none; }
    .robots span svg { margin-bottom: 2px; flex: none; }
    .pos { display: flex; align-items: center; width: 170px; box-sizing: border-box; margin-top: 1px; padding: 0 17px 0 37px; background: #b00000; font-size: 13px; line-height: 32px; justify-content: space-between; }
    .pos small { font-size: 10px; }
    .pos .set { display: flex; gap: 3px; padding-left: 13px; }
    .pos .set small { padding: 0 5px; }
  `;

  render() {
    return html`
      <div class="page">
        <header>
          <a class="home" href="#">HÁI SINH</a>
          <div class="user">
            <span>${this.greeting}</span>
            <button aria-label="Menu"><svg width="16" height="16" viewBox="0 0 16 16" fill="none" stroke="#999" stroke-width="1.500"><rect x=".8" y=".8" width="5.700" height="5.700" rx="1.500"/><rect x="9.500" y=".8" width="5.700" height="5.700" rx="1.500"/><rect x=".8" y="9.500" width="5.700" height="5.700" rx="1.500"/><rect x="9.500" y="9.500" width="5.700" height="5.700" rx="1.500"/></svg></button>
          </div>
        </header>
        <main>
          <div class="left">
            <price-board></price-board>
            <div class="work"><trade-chart></trade-chart><asset-panel></asset-panel></div>
          </div>
          <order-form></order-form>
        </main>
        <footer>
          <button class="orders">ÁCH LỆNH ĐIỀU KIỆN</button>
          <div class="server">Server</div>
        </footer>
        <div class="ticker">
          <div class="robots">
            <svg width="25" height="28" viewBox="0 0 25 28"><circle cx="12.500" cy="15" r="12" fill="#f0711d"/><path fill="#f58a2a" d="M4 0l5 3h7l5-3 1 9-9.500 9L3 9z"/><path fill="#e86817" d="M12.500 3H16l5-3 1 9-9.500 9z"/><path fill="#f58a2a" d="M12.500 17v10A12 12 0 0 1 1 17z"/><path fill="#ffd9b8" d="M7 9l4 3H8zM18 9l-4 3h3z"/><path fill="#f8b98a" d="M0 15l8 1-5 5z"/><path fill="#8a4a20" d="M11 15h3l-1.500 2z"/></svg>
            <span>XCAP-M1 <svg width="15" height="14" viewBox="0 0 15 14"><path d="M1 1l12 11M13 6v6H6" fill="none" stroke="#f00" stroke-width="1.800"/></svg></span>
            <span>XCAP-M5 <svg width="15" height="14" viewBox="0 0 15 14"><path d="M1 13L12 3" stroke="#90ee90" stroke-width="2.500"/><path fill="#90ee90" d="M6 1h8v7l-3-2-2-3z"/></svg></span>
            <span>TVI <svg width="20" height="12" viewBox="0 0 20 12"><path d="M0 6h5M6 6h5M12 6h7M14 1l5 5-5 5" fill="none" stroke="#ccc" stroke-width="1.500"/></svg></span>
          </div>
          <div class="pos"><b>93</b><small>796</small><span class="set">9 ( <small>6</small> )</span></div>
        </div>
      </div>
    `;
  }
}
